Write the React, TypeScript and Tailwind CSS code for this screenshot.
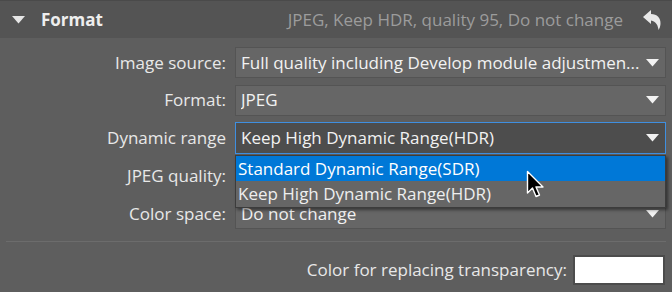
import React from 'react';

const font = { fontFamily: '"Open Sans", "Noto Sans", sans-serif' };

function Caret() {
  return (
    <svg width="13" height="8" viewBox="0 0 13 8" className="shrink-0 ml-[4px]">
      <path d="M0 0 H13 L6.5 7.5 Z" fill="#f2f2f2" />
    </svg>
  );
}

function Combo({ value, active }: { value: string; active?: boolean }) {
  return (
    <div
      className={
        active
          ? 'flex-1 min-w-0 h-[32px] flex items-center pl-[5px] pr-[6px] bg-[#4d4d4d] border border-[#3f8fe0]'
          : 'flex-1 min-w-0 h-[31px] flex items-center pl-[5px] pr-[6px] bg-[#666666] border border-[#545454]'
      }
    >
      <span className="flex-1 min-w-0 truncate text-[#f2f2f2] text-[17px] leading-[22px]">{value}</span>
      <Caret />
    </div>
  );
}

function Row({ label, value, active }: { label: string; value: string; active?: boolean }) {
  return (
    <div className="flex items-center">
      <div className="w-[235px] shrink-0 pr-[9px] text-right text-[#e8e8e8] text-[17px] leading-[22px]">{label}</div>
      <Combo value={value} active={active} />
    </div>
  );
}

export default function App() {
  return (
    <div className="w-[672px] h-[292px] bg-[#5e5e5e] relative overflow-hidden select-none" style={font}>
      {/* section header */}
      <div className="h-[38px] bg-[#545454] border-t border-[#4a4a4a] flex items-center pl-[12px] pr-[10px]">
        <svg width="13" height="8" viewBox="0 0 13 8" className="mr-[16px] mt-[1px] shrink-0">
          <path d="M0 0 H13 L6.5 7.5 Z" fill="#e6e6e6" />
        </svg>
        <span className="text-[#eeeeee] font-bold text-[17px] leading-[22px]">Format</span>
        <span className="flex-1 text-right text-[#9c9c9c] text-[17px] leading-[22px] pr-[19px] whitespace-nowrap">
          JPEG, Keep HDR, quality 95, Do not change
        </span>
        <svg width="20" height="22" viewBox="0 0 20 22" className="shrink-0">
          <path
            d="M1 8 L9 1 V5 C15 5 19 9 18.5 15 C18.3 17.5 17.5 19.5 16.5 21 C16.2 17 14 12 9 11.5 V15 Z"
            fill="#e8e8e8"
          />
        </svg>
      </div>

      {/* rows */}
      <div className="flex flex-col gap-[6.5px] pt-[9px] pr-[6px]">
        <Row label="Image source:" value="Full quality including Develop module adjustmen..." />
        <Row label="Format:" value="JPEG" />
        <Row label="Dynamic range" value="Keep High Dynamic Range(HDR)" active />
        <Row label="JPEG quality:" value="" />
        <Row label="Color space:" value="Do not change" />
      </div>

      <div className="mx-[6px] mt-[12px] h-px bg-[#6c6c6c]" />

      <div className="flex items-center justify-end pr-[7px] mt-[13px]">
        <span className="text-[#e8e8e8] text-[17px] leading-[22px] mr-[6px]">Color for replacing transparency:</span>
        <div className="w-[92px] h-[30px] border-2 border-[#4c4c4c] bg-white" />
      </div>

      {/* open dropdown list */}
      <div className="absolute left-[235px] top-[155px] w-[431px] border border-[#3c3c3c] bg-[#666666] shadow-[2px_2px_3px_rgba(0,0,0,0.45)]">
        <div className="h-[25px] bg-[#0078d7] flex items-center pl-[2px] text-white text-[17px] leading-[22px]">
          Standard Dynamic Range(SDR)
        </div>
        <div className="h-[26px] flex items-center pl-[2px] text-[#eeeeee] text-[17px] leading-[22px]">
          Keep High Dynamic Range(HDR)
        </div>
      </div>

      {/* mouse cursor */}
      <svg className="absolute left-[526px] top-[170px]" width="20" height="30" viewBox="0 0 20 30">
        <path
          d="M1.5 1.5 V23 L6.5 18 L10 26.5 L13.5 25 L10 17 H17 Z"
          fill="#000"
          stroke="#fff"
          strokeWidth="1.4"
          strokeLinejoin="round"
        />
      </svg>
    </div>
  );
}
